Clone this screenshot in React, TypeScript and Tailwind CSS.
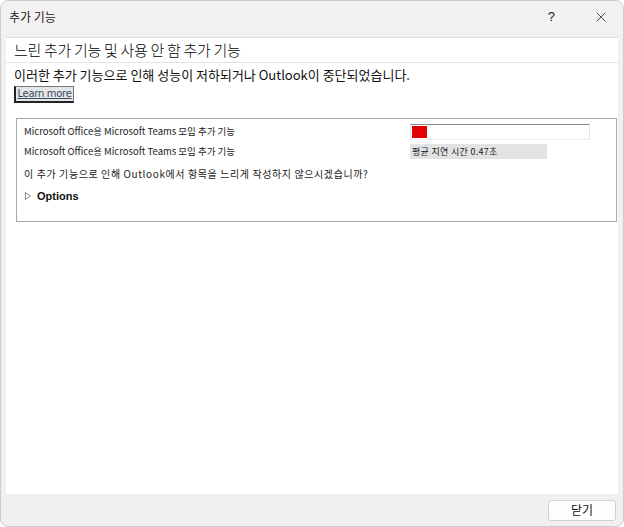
import { X } from "lucide-react";

const kr = "font-['Noto_Sans_CJK_KR','Noto_Sans',sans-serif]";

function AddinRow({ children, right, className }: { children: React.ReactNode; right?: React.ReactNode; className?: string }) {
  return (
    <div className={`flex items-center ${className ?? ""}`}>
      <div className="w-[386px] shrink-0 text-[9.5px] text-[#1a1a1a] leading-none">{children}</div>
      {right}
    </div>
  );
}

export default function App() {
  return (
    <div className={`w-[624px] h-[527px] bg-[#f0f0f0] border border-[#cdcdcd] rounded-lg overflow-hidden flex flex-col ${kr}`}>
      {/* title bar */}
      <div className="h-[32px] shrink-0 bg-[#f3f1f1] flex items-center pl-[8px] pr-[14px]">
        <span className="text-[12px] text-[#1b1b1b]">추가 기능</span>
        <span className="ml-auto mr-[38px] text-[13px] text-[#222] font-['Liberation_Sans',sans-serif]">?</span>
        <X size={16} strokeWidth={1.2} className="text-[#222]" />
      </div>

      <div className="flex-1 flex flex-col px-[5px] pt-[4px]">
        {/* header */}
        <div className="h-[26px] shrink-0 bg-white border-y border-[#e2e2e2] flex items-center pl-[8px]">
          <span className="text-[15px] font-light text-black tracking-[-0.3px]">느린 추가 기능 및 사용 안 함 추가 기능</span>
        </div>

        {/* body */}
        <div className="flex-1 bg-white flex flex-col pl-[8px] pr-[1px] pt-[4px]">
          <p className="text-[13px] leading-[16px] text-[#111]">
            이러한 추가 기능으로 인해 성능이 저하되거나 Outlook이 중단되었습니다.
          </p>
          <div className="mt-[3px] w-[60px] h-[17px] bg-[#e4e6e8] border border-[#777] border-l-2 border-b-2 border-l-[#222] border-b-[#222] flex items-center justify-center">
            <span className="text-[10px] leading-none text-[#3b4a5c] underline font-['DejaVu_Sans',sans-serif] tracking-[-0.3px]">Learn more</span>
          </div>

          {/* group box */}
          <div className="mt-[15px] ml-[2px] h-[104px] border border-[#a9a9a9] shadow-[inset_1px_1px_0_#ffffff] flex flex-col pl-[7px] pt-[5px]">
            <AddinRow
              className="h-[16px]"
              right={
                <div className="w-[180px] h-[16px] border-t border-[#8a8a8a] border-x border-b border-x-[#e6e6e6] border-b-[#eeeeee] bg-white p-[1px]">
                  <div className="w-[15px] h-full bg-[#e30000]" />
                </div>
              }
            >
              Microsoft Office용 Microsoft Teams 모임 추가 기능
            </AddinRow>
            <AddinRow
              className="mt-[4px] h-[15px]"
              right={
                <div className="w-[137px] h-[15px] bg-[#e2e3e4] flex items-center pl-[2px] text-[9px] leading-none text-[#1a1a1a] tracking-[0.3px]">
                  평균 지연 시간 0.47초
                </div>
              }
            >
              Microsoft Office용 Microsoft Teams 모임 추가 기능
            </AddinRow>
            <p className="mt-[8px] text-[10px] leading-[14px] text-[#1a1a1a] tracking-[0.6px]">
              이 추가 기능으로 인해 Outlook에서 항목을 느리게 작성하지 않으시겠습니까?
            </p>
            <div className="mt-[8px] h-[14px] flex items-center gap-[6px]">
              <svg width="6" height="8" viewBox="0 0 6 8" className="ml-[1px]">
                <path d="M0.5 0.5 L5.5 4 L0.5 7.5 Z" fill="none" stroke="#8a8a8a" strokeWidth="1" />
              </svg>
              <span className="text-[11px] font-bold text-[#111] font-['Liberation_Sans',sans-serif]">Options</span>
            </div>
          </div>
        </div>
      </div>

      {/* footer */}
      <div className="h-[32px] shrink-0 flex items-center justify-end pr-[7px]">
        <button className="w-[68px] h-[21px] bg-[#fdfdfd] border border-[#d0d0d0] rounded-[3px] text-[12px] text-[#111] leading-none">
          닫기
        </button>
      </div>
    </div>
  );
}
